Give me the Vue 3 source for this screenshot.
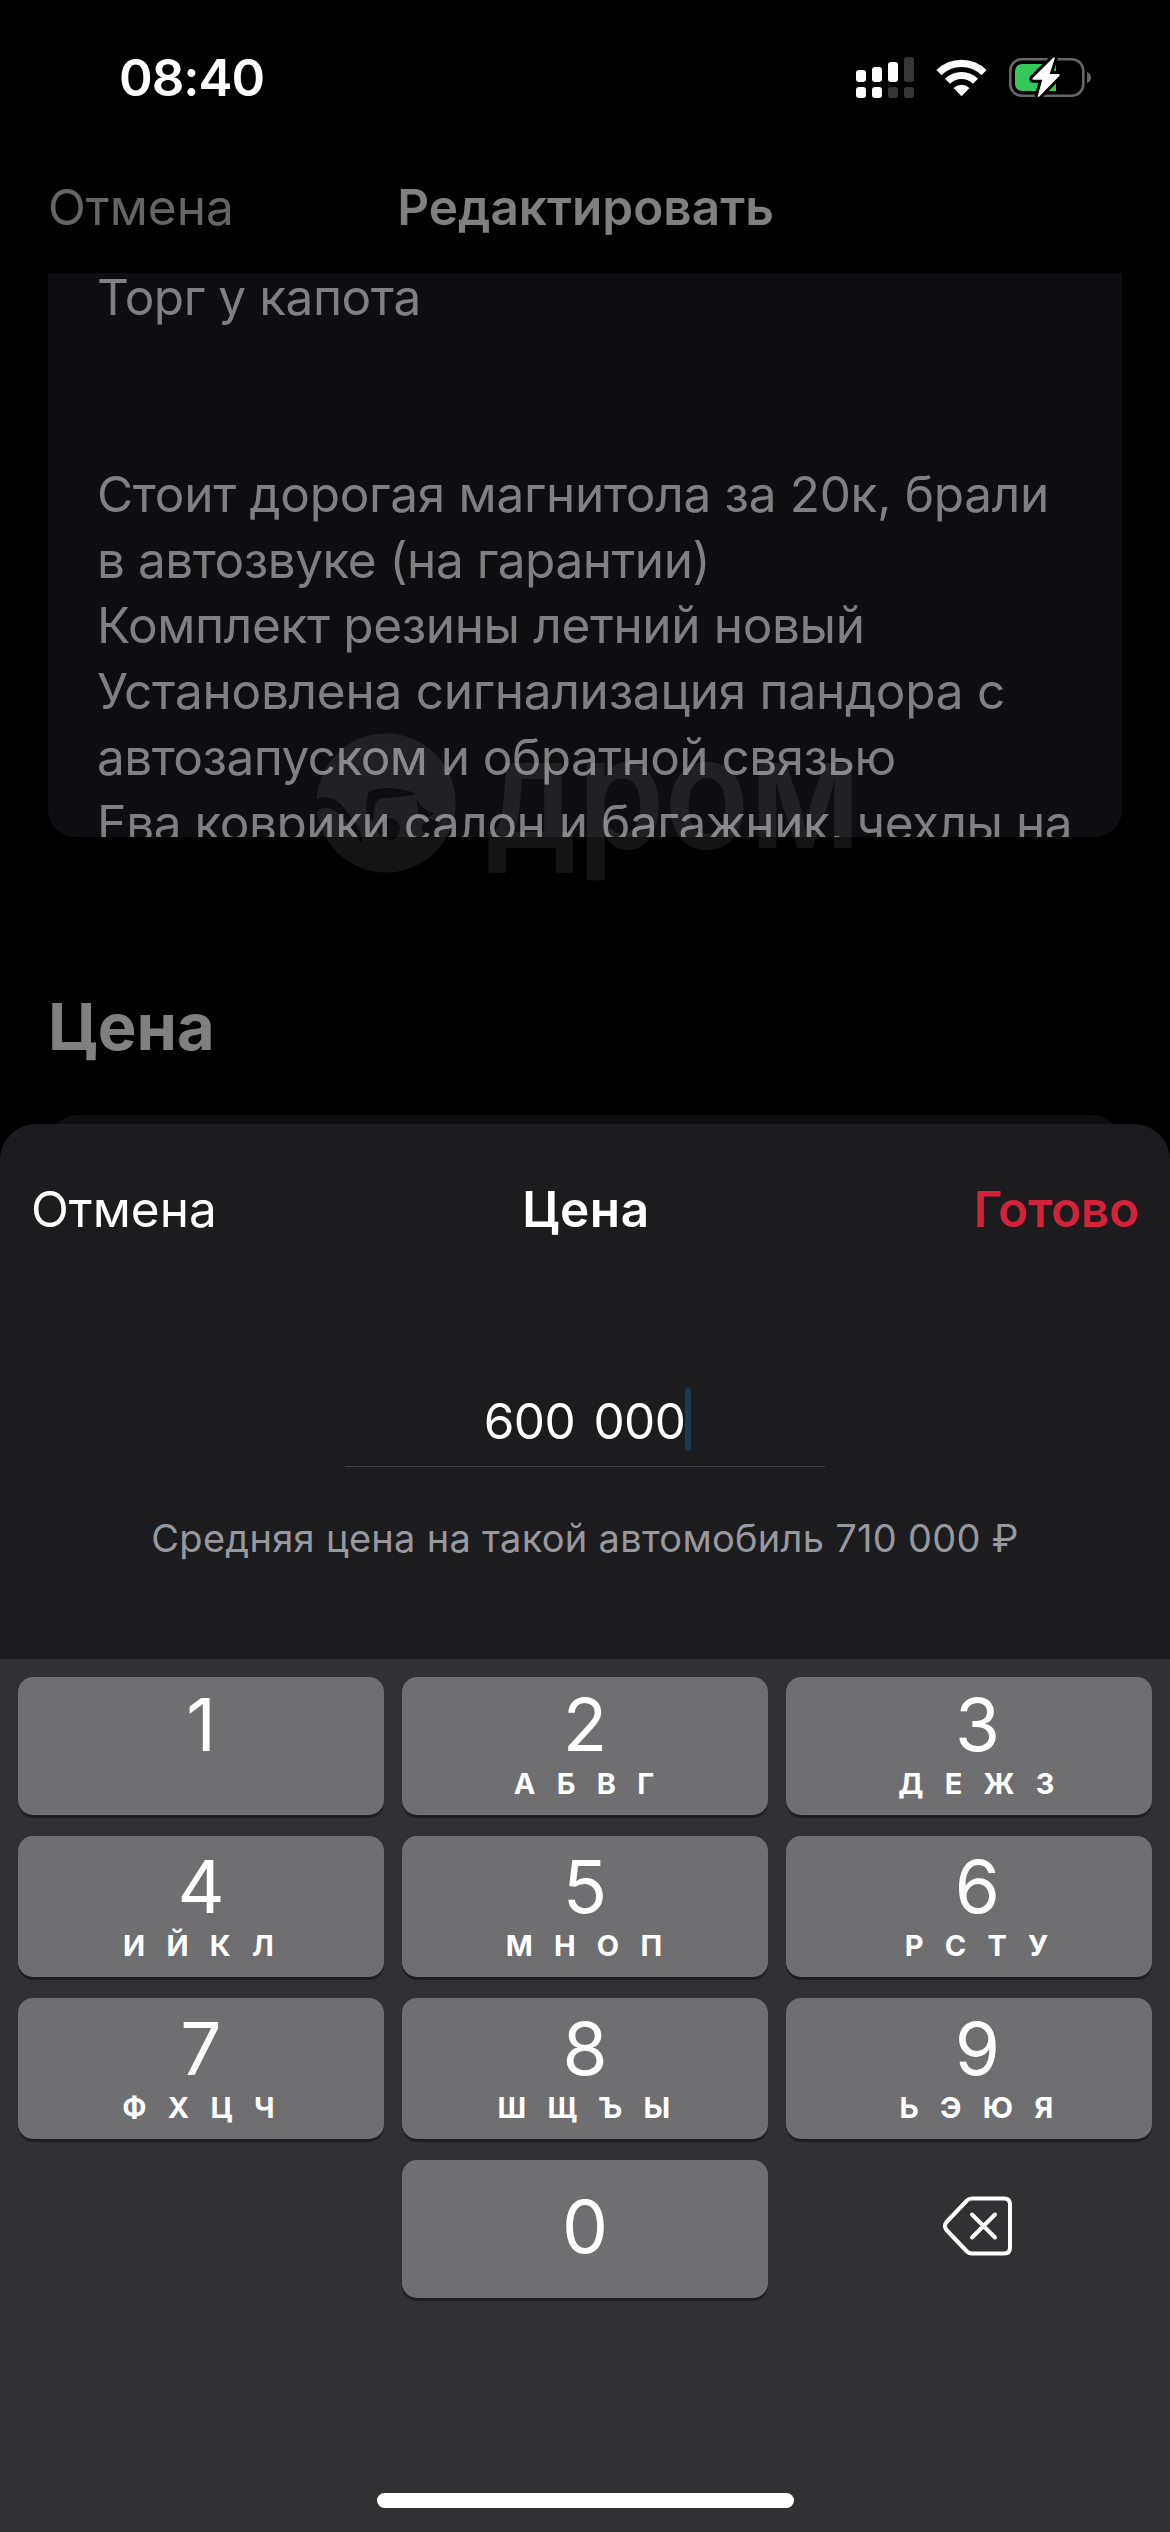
<script setup>
import { ref } from 'vue';

const description = ref([
  { text: 'Торг у капота', tracking: -0.45 },
  { text: '', tracking: 0 },
  { text: '', tracking: 0 },
  { text: 'Стоит дорогая магнитола за 20к, брали', tracking: -0.3 },
  { text: 'в автозвуке (на гарантии)', tracking: -0.48 },
  { text: 'Комплект резины летний новый', tracking: -0.35 },
  { text: 'Установлена сигнализация пандора с', tracking: -0.25 },
  { text: 'автозапуском и обратной связью', tracking: -0.55 },
  { text: 'Ева коврики салон и багажник, чехлы на', tracking: -0.47 },
]);

const price = ref('600 000');
const averagePrice = '710 000 ₽';

const keys = [
  { digit: '1', letters: '' },
  { digit: '2', letters: 'А Б В Г' },
  { digit: '3', letters: 'Д Е Ж З' },
  { digit: '4', letters: 'И Й К Л' },
  { digit: '5', letters: 'М Н О П' },
  { digit: '6', letters: 'Р С Т У' },
  { digit: '7', letters: 'Ф Х Ц Ч' },
  { digit: '8', letters: 'Ш Щ Ъ Ы' },
  { digit: '9', letters: 'Ь Э Ю Я' },
];

// Format digits in groups of three
const format = (digits) => digits.replace(/\B(?=(\d{3})+(?!\d))/g, ' ');

const pressKey = (digit) => {
  price.value = format(price.value.replace(/\s/g, '') + digit);
};

const removeDigit = () => {
  price.value = format(price.value.replace(/\s/g, '').slice(0, -1));
};
</script>

<template>
  <div class="screen">
    <!-- Status bar -->
    <header class="status-bar">
      <span class="time">08:40</span>
      <svg class="status-icons" width="240" height="44" viewBox="0 0 240 44">
        <g fill="#fff">
          <rect x="0" y="15" width="10" height="12" rx="3" />
          <rect x="16" y="12" width="10" height="15" rx="3" />
          <rect x="32" y="7" width="10" height="20" rx="3" />
          <rect x="0" y="32" width="10" height="11" rx="3" />
          <rect x="16" y="32" width="10" height="11" rx="3" />
        </g>
        <g fill="#363638">
          <rect x="48" y="2" width="10" height="25" rx="3" />
          <rect x="32" y="32" width="10" height="11" rx="3" />
          <rect x="48" y="32" width="10" height="11" rx="3" />
        </g>
        <g fill="none" stroke="#fff" stroke-width="7.2">
          <path d="M83 17.6a32 32 0 0 1 45 0" />
          <path d="M91.500 26.200a20 20 0 0 1 28 0" />
        </g>
        <path fill="#fff" d="M97.500 33q8-6.500 16 0l-7 7.300q-1 1-2 0z" />
        <rect x="154.300" y="4.300" width="73" height="36.500" rx="11.500" fill="none" stroke="#67676a" stroke-width="2.600" />
        <path fill="#67676a" d="M231 17q4 1.500 4 5.500t-4 5.500z" />
        <path fill="#34c759" d="M166 9h34v27h-34a7 7 0 0 1-7-7V16a7 7 0 0 1 7-7z" />
        <path
          d="M197.500 2.500L176.500 23.200q-.8 1.300.8 1.500h9l-4.500 16q-.2 2 1.500.8L203.500 20.700q.8-1.400-.8-1.700h-9l5-15.500q.2-1.600-1.200-1z"
          fill="#fff"
          stroke="#000"
          stroke-width="6"
          paint-order="stroke"
        />
      </svg>
    </header>

    <!-- Page under the sheet -->
    <nav class="nav-bar">
      <span class="nav-cancel">Отмена</span>
      <span class="nav-title">Редактировать</span>
    </nav>

    <main class="page">
      <div class="description">
        <p
          v-for="(line, index) in description"
          :key="index"
          class="line"
          :style="{ letterSpacing: line.tracking + 'px' }"
        >{{ line.text }}</p>
      </div>
      <h2 class="section-title">Цена</h2>
      <div class="price-card"></div>
      <div class="watermark">
        <svg width="140" height="140" viewBox="0 0 140 140">
          <mask id="car">
            <rect width="140" height="140" fill="#fff" />
            <g fill="#000">
              <path d="M0 66Q14 61 25 71 31 79 38 88 46 98 46 111 37 95 25 84 15 71 3 77L0 80z" />
              <path d="M50 84Q50 70 52 60 56 55 74 55 92 56 99 61 92 64 66 65 59 67 58 77L57 88z" />
              <circle cx="73" cy="96" r="11" />
              <path d="M100 66Q106 77 118 80 114 87 103 82z" />
              <circle cx="115" cy="95" r="9" />
            </g>
          </mask>
          <circle cx="70" cy="70" r="69.500" fill="#fff" mask="url(#car)" />
        </svg>
        <span class="watermark-text">дром</span>
      </div>
    </main>

    <!-- Price sheet -->
    <section class="sheet">
      <div class="sheet-header">
        <span class="sheet-cancel">Отмена</span>
        <span class="sheet-title">Цена</span>
        <span class="sheet-done">Готово</span>
      </div>
      <div class="amount">
        <span class="amount-value">{{ price }}</span>
        <i class="caret"></i>
      </div>
      <p class="hint">Средняя цена на такой автомобиль {{ averagePrice }}</p>
    </section>

    <!-- Numeric keyboard -->
    <section class="keyboard">
      <div class="keys">
        <button v-for="key in keys" :key="key.digit" class="key" @click="pressKey(key.digit)">
          <span class="digit">{{ key.digit }}</span>
          <span class="letters">{{ key.letters }}</span>
        </button>
        <span></span>
        <button class="key zero" @click="pressKey('0')">
          <span class="digit">0</span>
        </button>
        <button class="backspace" @click="removeDigit">
          <svg width="70" height="60" viewBox="0 0 70 60" fill="none" stroke="#fff" stroke-linecap="round" stroke-linejoin="round">
            <path stroke-width="4" d="M29 2.500h32q6 0 6 6v43q0 6-6 6H29q-3 0-5-2L3.500 34q-3-4 0-8L24 4.500q2-2 5-2z" />
            <path stroke-width="4" d="M29 18.500l23 23M52 18.500l-23 23" />
          </svg>
        </button>
      </div>
      <div class="home-indicator"></div>
    </section>
  </div>
</template>

<style>
body {
  margin: 0;
  background: #000;
}
</style>

<style scoped>
.screen {
  display: flex;
  flex-direction: column;
  width: 1170px;
  height: 2532px;
  overflow: hidden;
  background: #000;
  color: #fff;
  font-family: Inter, "Liberation Sans", sans-serif;
  font-size: 49.5px;
}

p,
h2 {
  margin: 0;
  font-weight: 400;
}

button {
  padding: 0;
  border: none;
  background: none;
  color: inherit;
  font-family: inherit;
}

/* Status bar */
.status-bar {
  display: flex;
  justify-content: space-between;
  box-sizing: border-box;
  height: 156px;
  padding: 48px 74px 0 119px;
}

.time {
  font-size: 51px;
  font-weight: 600;
  letter-spacing: -1px;
  line-height: 60px;
}

.status-icons {
  margin-top: 7px;
}

/* Navigation */
.nav-bar {
  display: grid;
  grid-template-columns: 1fr auto 1fr;
  height: 117px;
  padding: 0 47px 0 48px;
  line-height: 103px;
}

.nav-cancel {
  color: #656565;
}

.nav-title {
  color: #808080;
  font-weight: 600;
}

/* Page content */
.page {
  position: relative;
  height: 851px;
}

.description {
  height: 564px;
  margin: 0 48px;
  padding: 0 49px;
  box-sizing: border-box;
  overflow: hidden;
  border-radius: 0 0 27px 27px;
  background: #0e0e10;
  color: #808080;
}

.line {
  height: 65.7px;
  line-height: 65.7px;
  white-space: nowrap;
}

.line:first-child {
  margin-top: -8px;
}

.section-title {
  margin: 151px 0 0 48px;
  color: #808080;
  font-size: 65px;
  font-weight: 700;
  line-height: 78px;
}

.price-card {
  height: 60px;
  margin: 49px 48px 0;
  border-radius: 30px;
  background: #0e0e10;
}

/* Brand mark lying over the text */
.watermark {
  position: absolute;
  top: 460px;
  left: 316px;
  display: flex;
  opacity: 0.08;
}

.watermark-text {
  margin: -11px 0 0 30px;
  font-size: 156px;
  font-weight: 600;
  line-height: 140px;
  transform: scaleX(0.895);
  transform-origin: left;
}

/* Sheet */
.sheet {
  position: relative;
  height: 535px;
  border-radius: 36px 36px 0 0;
  background: #1c1c1e;
}

.sheet-header {
  display: grid;
  grid-template-columns: 1fr auto 1fr;
  padding: 55px 31px 0;
  line-height: 60px;
}

.sheet-title {
  padding-left: 2px;
  font-weight: 600;
  letter-spacing: 0.6px;
}

.sheet-done {
  color: #d3233b;
  font-weight: 600;
  letter-spacing: -0.3px;
  text-align: right;
}

.amount {
  display: flex;
  align-items: center;
  justify-content: center;
  box-sizing: border-box;
  width: 480px;
  height: 94px;
  margin: 134px auto 0;
  padding-left: 5px;
  border-bottom: 1px solid #424245;
}

.amount-value {
  padding-top: 2px;
  letter-spacing: -0.6px;
  word-spacing: 5px;
}

.caret {
  width: 6px;
  height: 63px;
  border-radius: 3px;
  background: #20374f;
}

.hint {
  margin-top: 46px;
  color: #98989f;
  font-size: 38px;
  letter-spacing: 0.29px;
  line-height: 50px;
  text-align: center;
}

/* Keyboard */
.keyboard {
  display: flex;
  flex-direction: column;
  align-items: center;
  flex: 1;
  background: #313133;
}

.keys {
  display: grid;
  grid-template-columns: repeat(3, 366px);
  grid-template-rows: 138px 141px 141px 138px;
  gap: 21px 18px;
  margin-top: 18px;
}

.key {
  display: flex;
  flex-direction: column;
  align-items: center;
  justify-content: flex-end;
  box-sizing: border-box;
  border-radius: 15px;
  background: #6f6f71;
  box-shadow: 0 3px 0 #1e1e20;
}

/* Labels of the right column sit slightly off centre */
.key:nth-child(3n) {
  padding-left: 17px;
}

.digit {
  font-size: 73px;
  line-height: 80px;
}

.letters {
  height: 50px;
  padding-left: 5px;
  font-size: 29px;
  font-weight: 700;
  letter-spacing: 7.2px;
  line-height: 38px;
}

.key:nth-child(3n + 1) .letters {
  padding-left: 2px;
}

.zero {
  justify-content: flex-start;
  padding-top: 27px;
}

.backspace {
  display: flex;
  align-items: center;
  justify-content: center;
  padding: 0 0 7px 17px;
}

.home-indicator {
  width: 417px;
  height: 15px;
  margin-top: 195px;
  border-radius: 8px;
  background: #fff;
}
</style>
